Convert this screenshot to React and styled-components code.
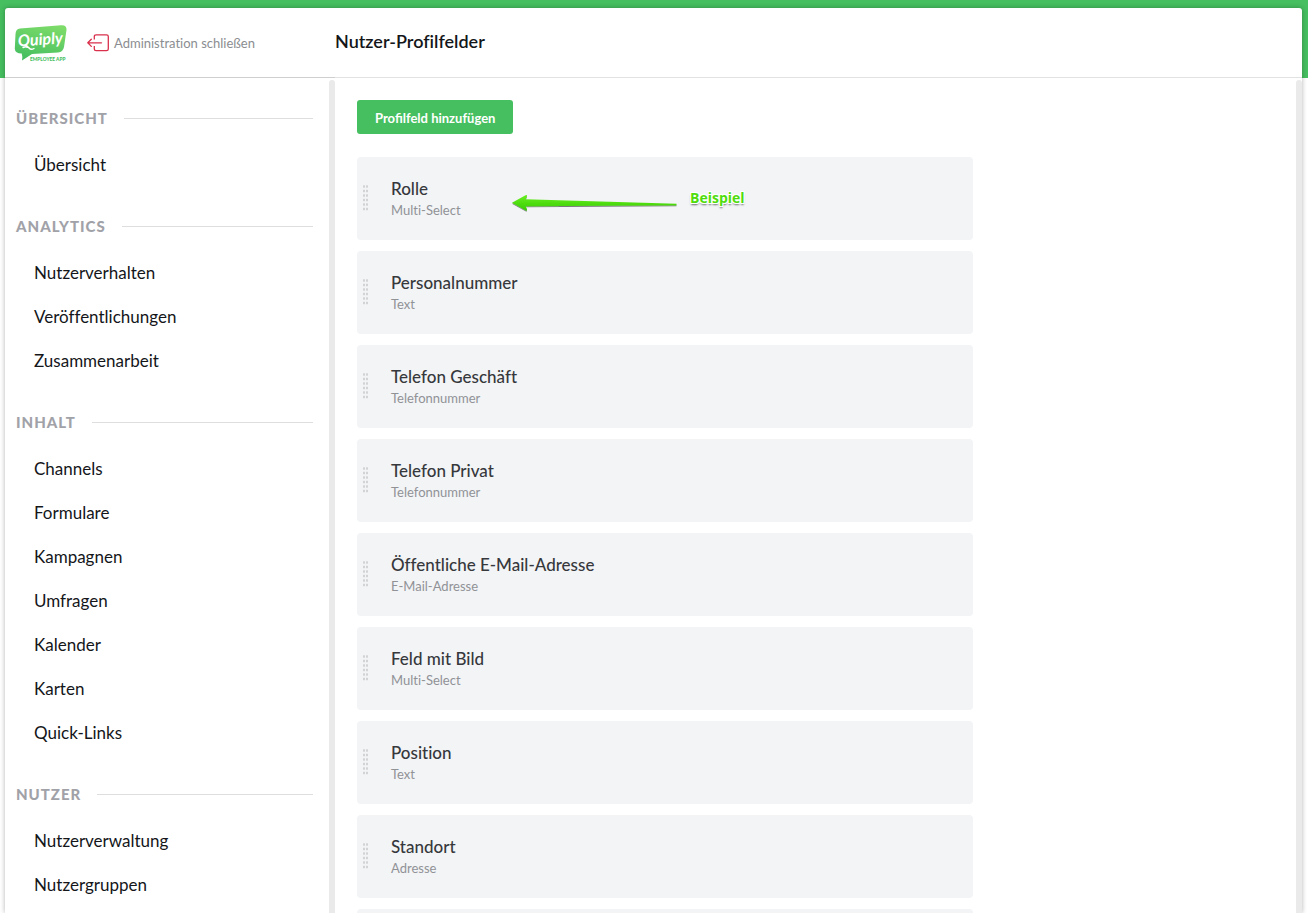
import React from 'react';
import styled, { createGlobalStyle } from 'styled-components';

const SECTIONS = [
	{ title: 'Übersicht', items: ['Übersicht'] },
	{
		title: 'Analytics',
		items: ['Nutzerverhalten', 'Veröffentlichungen', 'Zusammenarbeit'],
	},
	{
		title: 'Inhalt',
		items: [
			'Channels',
			'Formulare',
			'Kampagnen',
			'Umfragen',
			'Kalender',
			'Karten',
			'Quick-Links',
		],
	},
	{ title: 'Nutzer', items: ['Nutzerverwaltung', 'Nutzergruppen'] },
];

const FIELDS = [
	{ name: 'Rolle', type: 'Multi-Select', note: 'Beispiel' },
	{ name: 'Personalnummer', type: 'Text' },
	{ name: 'Telefon Geschäft', type: 'Telefonnummer' },
	{ name: 'Telefon Privat', type: 'Telefonnummer' },
	{ name: 'Öffentliche E-Mail-Adresse', type: 'E-Mail-Adresse' },
	{ name: 'Feld mit Bild', type: 'Multi-Select' },
	{ name: 'Position', type: 'Text' },
	{ name: 'Standort', type: 'Adresse' },
];

const Logo = () => (
	<svg width="54" height="40" viewBox="0 0 54 40" role="img" aria-label="Quiply">
		<defs>
			<linearGradient id="logoFill" x1="0.7" y1="0" x2="0.3" y2="1">
				<stop offset="0" stopColor="#7cdb69" />
				<stop offset="1" stopColor="#45be60" />
			</linearGradient>
		</defs>
		<path
			d="M6 5.600 47 2.200Q53 1.800 52.500 7L50 24Q49 29.200 44 29.500L18 31Q13.500 34 8 37.500Q8.800 33.500 7.700 30.500Q1 30.500.8 25.700L1.500 11Q1.800 6 6 5.600Z"
			fill="url(#logoFill)"
		/>
		<text
			x="4"
			y="22"
			transform="rotate(-4 26 18)"
			fill="#fff"
			fontFamily="Lato, sans-serif"
			fontSize="16"
			fontStyle="italic"
			fontWeight="700"
		>
			Quiply
		</text>
		<path d="M9 24.500q4-1.800 6 .5t5 .5" fill="none" stroke="#fff" strokeWidth="1.400" strokeLinecap="round" />
		<text x="16" y="38" fill="#45be60" fontFamily="Lato, sans-serif" fontSize="4.800" fontWeight="900">
			EMPLOYEE APP
		</text>
	</svg>
);

const ExitIcon = () => (
	<svg width="22" height="18" viewBox="0 0 22 18" fill="none" stroke="#d9304c" strokeWidth="1.300" aria-hidden="true">
		<path d="M7.300 5.500V2.600Q7.300.8 9.100.8H19.500Q21.300.8 21.300 2.600V14.900Q21.300 16.700 19.500 16.700H9.100Q7.300 16.700 7.300 14.900V12" />
		<path d="M14.500 8.800H.9M4.300 5.200.8 8.800 4.300 12.400" strokeLinecap="round" strokeLinejoin="round" />
	</svg>
);

const GripIcon = () => (
	<svg width="6" height="28" viewBox="0 0 6 28" fill="#d2d3d5" aria-hidden="true">
		{[0, 1, 2, 3, 4, 5].map((row) => (
			<React.Fragment key={row}>
				<rect x="0" y={row * 4.5 + 0.3} width="2" height="2.4" />
				<rect x="3" y={row * 4.5 + 0.3} width="2" height="2.4" />
			</React.Fragment>
		))}
	</svg>
);

const Arrow = () => (
	<svg width="168" height="22" viewBox="0 0 168 22" aria-hidden="true">
		<defs>
			<linearGradient id="arrowFill" x1="0" y1="0" x2="0" y2="1">
				<stop offset="0" stopColor="#6af022" />
				<stop offset="1" stopColor="#38cc00" />
			</linearGradient>
			<filter id="arrowShadow" x="-5%" y="-20%" width="110%" height="150%">
				<feDropShadow dx="0" dy="1" stdDeviation="0.6" floodColor="#000" floodOpacity="0.5" />
			</filter>
		</defs>
		<path
			d="M1 9.800 14.500 2.200Q16.800 1.200 15.800 3.700L14.700 6.300 165.500 10.700V12.200L14.700 13.300 15.800 15.700Q16.800 18.300 14.500 17.300Z"
			fill="url(#arrowFill)"
			filter="url(#arrowShadow)"
		/>
	</svg>
);

const App = () => {
	return (
		<>
			<GlobalStyle />
			<Page>
				<Panel>
					<Header>
						<Brand>
							<Logo />
							<CloseLink href="#">
								<ExitIcon />
								Administration schließen
							</CloseLink>
						</Brand>
						<TitleBar>
							<PageTitle>Nutzer-Profilfelder</PageTitle>
						</TitleBar>
					</Header>
					<Body>
						<Sidebar>
							<Nav>
								{SECTIONS.map((section) => (
									<Section key={section.title}>
										<SectionTitle>{section.title}</SectionTitle>
										<NavList>
											{section.items.map((item) => (
												<li key={item}>
													<NavLink href="#">{item}</NavLink>
												</li>
											))}
										</NavList>
									</Section>
								))}
							</Nav>
							<ScrollTrack />
						</Sidebar>
						<Main>
							<Content>
								<AddButton type="button">Profilfeld hinzufügen</AddButton>
								<FieldList>
									{FIELDS.map((field) => (
										<FieldCard key={field.name}>
											<GripIcon />
											<div>
												<FieldName>{field.name}</FieldName>
												<FieldType>{field.type}</FieldType>
											</div>
											{field.note && (
												<Annotation>
													<Arrow />
													<Note>{field.note}</Note>
												</Annotation>
											)}
										</FieldCard>
									))}
									<FieldCard aria-hidden="true" />
								</FieldList>
							</Content>
							<ScrollTrack />
						</Main>
					</Body>
				</Panel>
			</Page>
		</>
	);
};

export default App;

const GlobalStyle = createGlobalStyle`
	* {
		box-sizing: border-box;
	}
	body {
		margin: 0;
		font-family: Lato, sans-serif;
		font-variant-ligatures: none;
		color: #14161a;
		background: #fff;
	}
	h1, h2, h3, p, ul {
		margin: 0;
		padding: 0;
	}
	ul {
		list-style: none;
	}
	a {
		color: inherit;
		text-decoration: none;
	}
`;

const Page = styled.div`
	height: 100vh;
	padding: 8px 6px 0 5px;
	overflow: hidden;
	background: linear-gradient(#46bf60 78px, #fff 78px);
`;

const Panel = styled.div`
	display: flex;
	flex-direction: column;
	height: 100%;
	border-radius: 3px 3px 0 0;
	background: #fff;
	box-shadow: 0 0 5px rgba(0, 0, 0, 0.3);
`;

const Header = styled.header`
	display: grid;
	grid-template-columns: 330px 1fr;
	height: 70px;
	flex-shrink: 0;
`;

const Brand = styled.div`
	display: flex;
	align-items: center;
	gap: 19px;
	padding-left: 9px;
	border-bottom: 1px solid #cfcfcf;
`;

const CloseLink = styled.a`
	display: flex;
	align-items: center;
	gap: 5px;
	color: #8b8d91;
	font-size: 13px;
`;

const TitleBar = styled.div`
	display: flex;
	align-items: center;
	padding-bottom: 4px;
	border-bottom: 1px solid #e2e2e2;
`;

const PageTitle = styled.h1`
	font-size: 18px;
	line-height: 24px;
	font-weight: 600;
`;

const Body = styled.div`
	display: grid;
	grid-template-columns: 330px 1fr;
	flex: 1;
	min-height: 0;
`;

const Sidebar = styled.aside`
	display: flex;
	min-height: 0;
`;

const Nav = styled.nav`
	flex: 1;
	padding: 18px 16px 0 11px;
	overflow: hidden;
`;

const Section = styled.section`
	margin-bottom: 17px;
`;

const SectionTitle = styled.h2`
	display: flex;
	align-items: center;
	gap: 16px;
	height: 44px;
	margin-bottom: 3px;
	color: #a1a2a8;
	font-size: 15px;
	font-weight: 900;
	letter-spacing: 1px;
	text-transform: uppercase;
	&::after {
		content: '';
		flex: 1;
		height: 1px;
		background: #dedee0;
	}
`;

const NavList = styled.ul`
	padding-left: 18px;
`;

const NavLink = styled.a`
	display: block;
	font-size: 17px;
	line-height: 44px;
`;

const ScrollTrack = styled.div`
	width: 6px;
	margin-top: 2px;
	border-radius: 3px 3px 0 0;
	background: #eaeaea;
`;

const Main = styled.main`
	display: flex;
	min-width: 0;
	min-height: 0;
`;

const Content = styled.div`
	flex: 1;
	padding: 22px 22px 0;
	overflow: hidden;
`;

const AddButton = styled.button`
	height: 34px;
	padding: 2px 18px 0;
	border: 0;
	border-radius: 3px;
	background: #46bf60;
	color: #fff;
	font-family: inherit;
	font-size: 13px;
	font-weight: 700;
`;

const FieldList = styled.ul`
	display: flex;
	flex-direction: column;
	gap: 11px;
	max-width: 616px;
	margin-top: 23px;
`;

const FieldCard = styled.li`
	position: relative;
	display: flex;
	align-items: center;
	gap: 22px;
	height: 83px;
	flex-shrink: 0;
	padding: 0 6px;
	border-radius: 4px;
	background: #f3f4f6;
`;

const FieldName = styled.h3`
	color: #36383c;
	font-size: 17px;
	line-height: 22px;
	font-weight: 500;
`;

const FieldType = styled.p`
	color: #909296;
	font-size: 13px;
	line-height: 20px;
`;

const Annotation = styled.div`
	position: absolute;
	top: 32px;
	left: 154px;
	display: flex;
	align-items: flex-start;
	gap: 11px;
	pointer-events: none;
	svg {
		margin-top: 4px;
	}
`;

const Note = styled.span`
	color: #4fdc0c;
	font-family: 'Open Sans', sans-serif;
	font-size: 14px;
	line-height: 18px;
	font-weight: 700;
	text-shadow: -1px -1px 0 #fff, 1px -1px 0 #fff, -1px 1px 0 #fff, 1px 1px 0 #fff,
		0 2px 2px rgba(0, 0, 0, 0.6);
`;
